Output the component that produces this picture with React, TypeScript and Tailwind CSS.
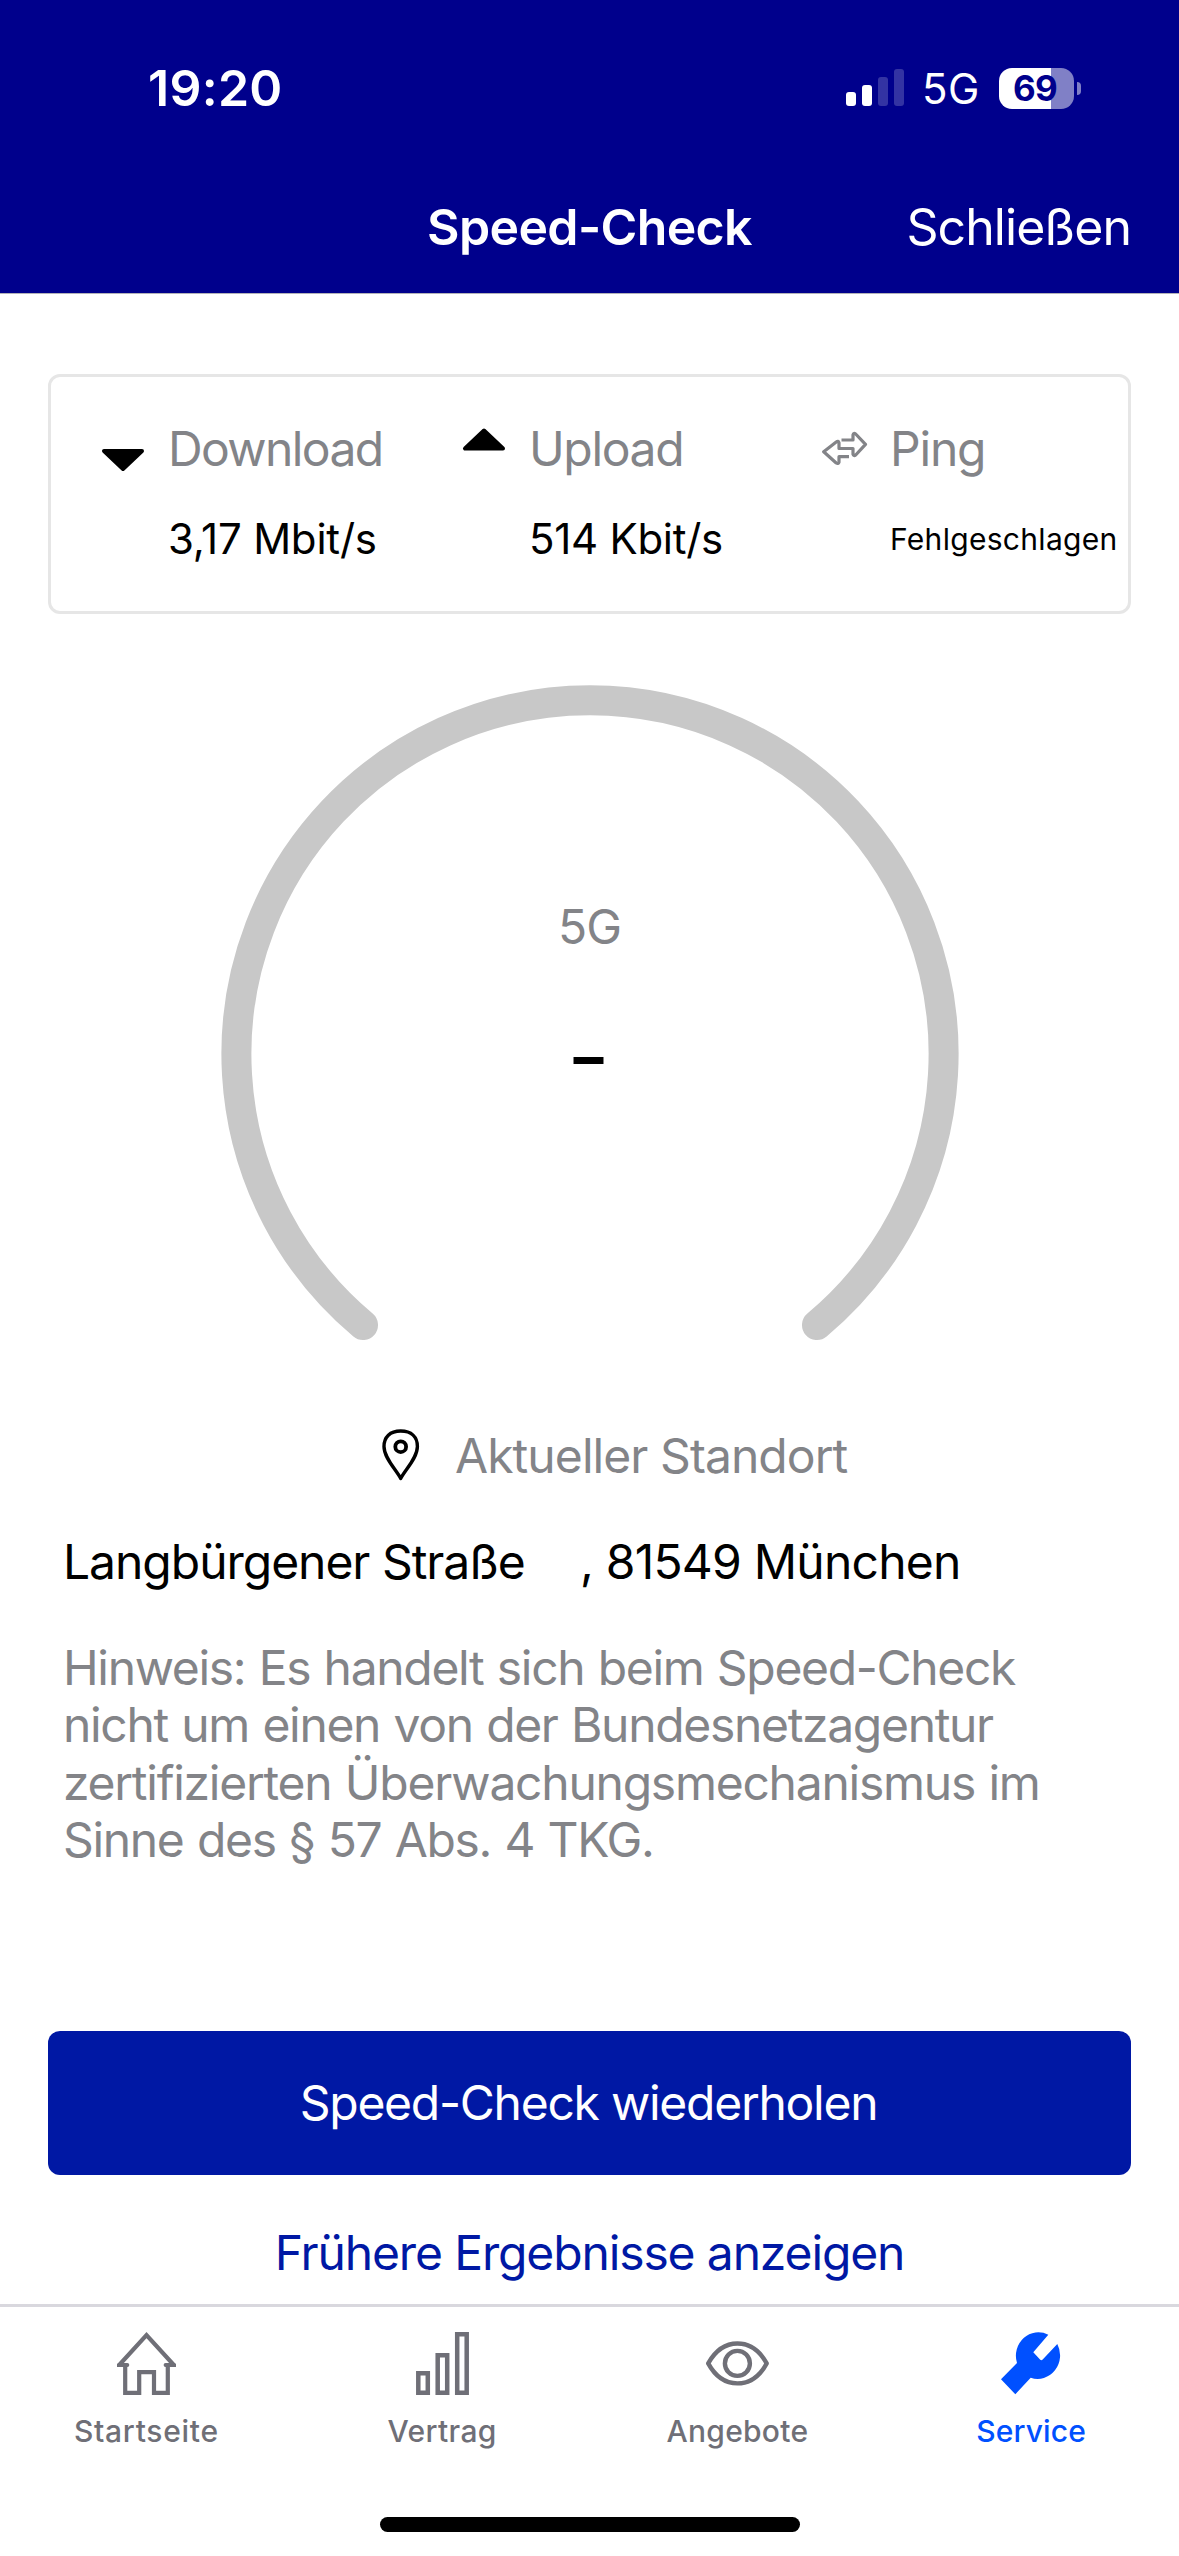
import type { ReactNode } from "react";
import clsx from "clsx";

interface MetricProps {
  icon: ReactNode;
  label: string;
  value: string;
  labelClass: string;
  valueClass: string;
}

interface TabProps {
  icon: ReactNode;
  label: string;
  className?: string;
  active?: boolean;
}

const notice = [
  "Hinweis: Es handelt sich beim Speed-Check",
  "nicht um einen von der Bundesnetzagentur",
  "zertifizierten Überwachungsmechanismus im",
  "Sinne des § 57 Abs. 4 TKG.",
];

function DownIcon() {
  return (
    <svg width="46" height="60" viewBox="0 1 46 60">
      <path d="M4 33h38L23 51Z" stroke="#000" strokeWidth="4" strokeLinejoin="round" />
    </svg>
  );
}

function UpIcon() {
  return (
    <svg width="46" height="60" viewBox="0 1 46 60">
      <path d="M4 30.5h38L23 12.5Z" stroke="#000" strokeWidth="4" strokeLinejoin="round" />
    </svg>
  );
}

function PingIcon() {
  return (
    <svg
      width="46"
      height="60"
      viewBox="0 1 46 60"
      fill="none"
      stroke="#838488"
      strokeWidth="3.2"
      strokeLinejoin="round"
    >
      <path d="M19.5 22H31v-5.200q.6-2.200 2.700-.8L43.500 26.300 33.700 37q-2 1.500-2.700-.7v-5.800H17v-5.800q-.7-2.200-2.800-.7L1.700 33.700 14.200 45q2.100 1.300 2.800-.8v-5.500h10" />
    </svg>
  );
}

function PinIcon() {
  return (
    <svg width="38" height="53" viewBox="0 0 38 53" fill="none" stroke="#000" strokeWidth="3.4">
      <path
        d="M18.700 49.500C14 40.500 2 29 2 17.500 2 8 8 2 18.700 2S35.400 8 35.400 17.500C35.400 29 23.400 40.500 18.700 49.500Z"
        strokeLinejoin="round"
      />
      <circle cx="18.700" cy="17.700" r="5.400" strokeWidth="3.8" />
    </svg>
  );
}

function HomeIcon() {
  return (
    <svg
      width="59"
      height="63"
      viewBox="0 0 59 63"
      fill="none"
      stroke="currentColor"
      strokeWidth="4.200"
    >
      <path d="M8.200 33v27.800h14V40.200H37v20.600h13.800V33" />
      <path d="M10.300 33H2.200L29.500 3.200 56.800 33h-8.100" />
      <path d="M2.200 33h8M48.700 33h8.100" strokeLinecap="round" />
    </svg>
  );
}

function ContractIcon() {
  return (
    <svg width="53" height="63" viewBox="0 0 53 63" fill="none" stroke="currentColor" strokeWidth="4.500">
      <path d="M2.300 41.300h9.500v19.400H2.300ZM21.700 23.300h9.500v37.400h-9.500ZM41.200 2.300h9.500v58.400h-9.500Z" />
    </svg>
  );
}

function EyeIcon() {
  return (
    <svg width="63" height="63" viewBox="0 -9 63 63" fill="none" stroke="currentColor" strokeWidth="4.400">
      <path
        d="M2.200 22.400C8 12 17 2.500 31.400 2.500S55 12 60.700 22.400C55 33 46 42.400 31.400 42.400S8 33 2.200 22.400Z"
        strokeLinejoin="round"
      />
      <circle cx="31.400" cy="22.400" r="12.500" />
    </svg>
  );
}

function ServiceIcon() {
  return (
    <svg width="60" height="63" viewBox="0 0 60 63" fill="currentColor">
      <path d="M47.300 2.700 32.300 20.300 39 27.500q1.300 1.400 2.700 0L56.300 12A22.400 23.500 0 0 1 29.700 45.700L14.300 62.300 0 47.300 16 31A22.400 23.500 0 0 1 47.300 2.700Z" />
    </svg>
  );
}

function StatusBar() {
  return (
    <div className="flex h-[60px] items-center pr-[98px] pl-[148px]">
      <span className="text-[50px] leading-[60px] font-semibold tracking-[0.27px]">19:20</span>
      <div className="ml-auto flex items-end gap-1.5 pb-px">
        <span className="h-3.5 w-2.5 rounded-[3px] bg-white" />
        <span className="h-[21px] w-2.5 rounded-[3px] bg-white" />
        <span className="h-[29px] w-2.5 rounded-[3px] bg-white/20" />
        <span className="h-[37px] w-2.5 rounded-[3px] bg-white/20" />
      </div>
      <span className="ml-[18px] w-[77px] pt-0.5 text-[42px] leading-[60px] tracking-[0.5px]">5G</span>
      <div className="flex h-[41px] w-[75px] items-center justify-center rounded-[13px] bg-[linear-gradient(90deg,#fff_52px,#8080c6_52px)] pr-[3px] text-[35px] leading-[41px] font-bold tracking-[-0.7px] text-[#00008c]">
        69
      </div>
      <span className="ml-[3px] h-[13px] w-1 rounded-r-full bg-[#8080c6]" />
    </div>
  );
}

function Metric({ icon, label, value, labelClass, valueClass }: MetricProps) {
  return (
    <div className="grid grid-cols-[46px_auto] content-start gap-x-[22px] gap-y-[30px] pl-[49px] leading-[60px] whitespace-nowrap">
      {icon}
      <span className={clsx("text-[48px] text-[#838488]", labelClass)}>{label}</span>
      <span className={clsx("col-start-2", valueClass)}>{value}</span>
    </div>
  );
}

function Gauge() {
  return (
    <div className="relative mx-auto mt-[71px] h-[656px] w-[738px]">
      <svg className="overflow-visible" width="738" height="656" viewBox="0 0 738 656" fill="none">
        <path
          d="M142 640A353.600 353.600 0 1 1 596 640"
          stroke="#c8c8c8"
          strokeWidth="30"
          strokeLinecap="round"
        />
      </svg>
      <div className="absolute inset-0 flex flex-col items-center pt-[212px] leading-[60px]">
        <span className="text-[48px] tracking-[-1px] text-[#838488]">5G</span>
        <span className="mt-[69px] pr-0.5 text-[60px] font-bold">–</span>
      </div>
    </div>
  );
}

function Tab({ icon, label, className, active }: TabProps) {
  return (
    <button
      type="button"
      className={clsx(
        "flex flex-col items-center gap-[18px] text-[30px] leading-9 font-medium",
        active ? "text-[#0050ff]" : "text-[#6f6f77]",
        className
      )}
    >
      {icon}
      <span>{label}</span>
    </button>
  );
}

export default function App() {
  return (
    <div className="flex h-[2556px] w-[1179px] flex-col overflow-hidden bg-white font-['Inter',sans-serif] text-black">
      <header className="h-[294px] border-b border-[#b2b2b8] bg-[#00008c] pt-[58px] text-white">
        <StatusBar />
        <div className="mt-[43px] grid h-[133px] grid-cols-[1fr_auto_1fr] items-center pr-[48px] pl-[48px] text-[50px]">
          <h1 className="col-start-2 font-semibold tracking-[-0.65px]">Speed-Check</h1>
          <button type="button" className="justify-self-end tracking-[-0.95px]">
            Schließen
          </button>
        </div>
      </header>

      <main className="flex flex-1 flex-col">
        <section className="mx-[48px] mt-20 grid h-[240px] grid-cols-[361px_361px_1fr] rounded-xl border-3 border-[#e6e6e6] pt-[42px]">
          <Metric
            icon={<DownIcon />}
            label="Download"
            value="3,17 Mbit/s"
            labelClass="tracking-[-1.6px]"
            valueClass="text-[42px] tracking-[-0.2px]"
          />
          <Metric
            icon={<UpIcon />}
            label="Upload"
            value="514 Kbit/s"
            labelClass="tracking-[-1.35px]"
            valueClass="text-[42px] tracking-[-0.28px]"
          />
          <Metric
            icon={<PingIcon />}
            label="Ping"
            value="Fehlgeschlagen"
            labelClass="tracking-[-1.2px]"
            valueClass="text-[30px] tracking-[0.3px]"
          />
        </section>

        <Gauge />

        <div className="mt-[83px] ml-[382px] flex items-center gap-[35px] text-[48px] leading-[60px] tracking-[-0.93px] text-[#838488]">
          <PinIcon />
          <span className="pt-0.5">Aktueller Standort</span>
        </div>

        <p className="mt-[46px] flex pl-[63px] text-[48px] leading-[60px] whitespace-nowrap">
          <span className="w-[517px] tracking-[-1.03px]">Langbürgener Straße</span>
          <span className="tracking-[-0.78px]">, 81549 München</span>
        </p>

        <p className="mt-[47px] pl-[63px] text-[48px] leading-[57.3px] tracking-[-1.32px] [word-spacing:1.2px] whitespace-nowrap text-[#838488]">
          {notice.map((line, index) => (
            <span key={line} className={clsx("block", index === 2 && "tracking-[-1.25px]")}>
              {line}
            </span>
          ))}
        </p>

        <button
          type="button"
          className="mx-[48px] mt-[163px] h-36 rounded-xl bg-[#0018a4] pr-0.5 text-[48px] tracking-[-1.26px] text-white"
        >
          Speed-Check wiederholen
        </button>
        <button
          type="button"
          className="mt-[48px] text-[48px] leading-[60px] tracking-[-1.13px] text-[#0018a4]"
        >
          Frühere Ergebnisse anzeigen
        </button>
      </main>

      <nav className="h-[252px] border-t-3 border-[#d9d8de] pt-[25px]">
        <div className="grid grid-cols-4">
          <Tab icon={<HomeIcon />} label="Startseite" className="pr-0.5 tracking-[0.72px]" />
          <Tab icon={<ContractIcon />} label="Vertrag" className="tracking-[0.4px]" />
          <Tab icon={<EyeIcon />} label="Angebote" className="pl-px tracking-[0.27px]" />
          <Tab icon={<ServiceIcon />} label="Service" className="pr-px tracking-[0.14px]" active />
        </div>
        <div className="mx-auto mt-[68px] h-[15px] w-[420px] rounded-full bg-black" />
      </nav>
    </div>
  );
}
